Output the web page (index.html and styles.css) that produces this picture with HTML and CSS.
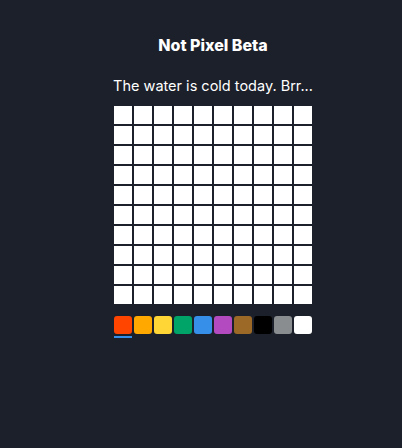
FILE: index.html
```html
<!DOCTYPE html>
<html lang="en">

<head>
  <meta charset="UTF-8">
  <meta name="viewport" content="width=device-width, initial-scale=1.0">
  <title>Not Pixel Beta</title>
  <link rel="stylesheet" href="styles.css">
</head>

<body>
  <main class="app">
    <h1 class="app-title">Not Pixel Beta</h1>
    <p class="app-status">The water is cold today. Brr...</p>
    <div class="canvas" id="canvas"></div>
    <div class="palette">
      <button class="swatch is-active" style="background: #ff4500"></button>
      <button class="swatch" style="background: #ffa800"></button>
      <button class="swatch" style="background: #ffd635"></button>
      <button class="swatch" style="background: #00a368"></button>
      <button class="swatch" style="background: #3690ea"></button>
      <button class="swatch" style="background: #b44ac0"></button>
      <button class="swatch" style="background: #9c6926"></button>
      <button class="swatch" style="background: #000000"></button>
      <button class="swatch" style="background: #898d90"></button>
      <button class="swatch" style="background: #ffffff"></button>
    </div>
  </main>
  <script>
    const $canvas = document.getElementById("canvas");
    for (let i = 0; i < 100; i++) {
      const $pixel = document.createElement("div");
      $pixel.classList.add("pixel");
      $canvas.appendChild($pixel);
    }
  </script>
</body>

</html>
```

FILE: styles.css
```css
html {
  box-sizing: border-box;
  font-family: Inter, "Noto Sans", sans-serif;
  font-size: 16px;
}

*,
*:before,
*:after {
  box-sizing: inherit;
}

body {
  margin: 0;
  min-height: 448px;
  background-color: #1b202a;
  color: #fff;
}

.app {
  display: flex;
  flex-direction: column;
  align-items: center;
  padding-top: 35px;
  padding-left: 24px;
}

.app-title {
  margin: 0;
  font-size: 16px;
  font-weight: 800;
  line-height: 20px;
}

.app-status {
  margin: 21px 0 0;
  font-size: 14.5px;
  line-height: 20px;
}

.canvas {
  display: grid;
  grid-template-columns: repeat(10, 18px);
  grid-auto-rows: 18px;
  gap: 2px;
  margin-top: 10px;
}

.pixel {
  background-color: #fff;
}

.palette {
  display: flex;
  gap: 2px;
  margin-top: 12px;
}

.swatch {
  position: relative;
  width: 18px;
  height: 18px;
  padding: 0;
  border: none;
  border-radius: 3px;
  cursor: pointer;
}

.swatch.is-active:after {
  content: "";
  position: absolute;
  left: 0;
  right: 0;
  bottom: -4px;
  height: 2px;
  background-color: #3690ea;
}
```
